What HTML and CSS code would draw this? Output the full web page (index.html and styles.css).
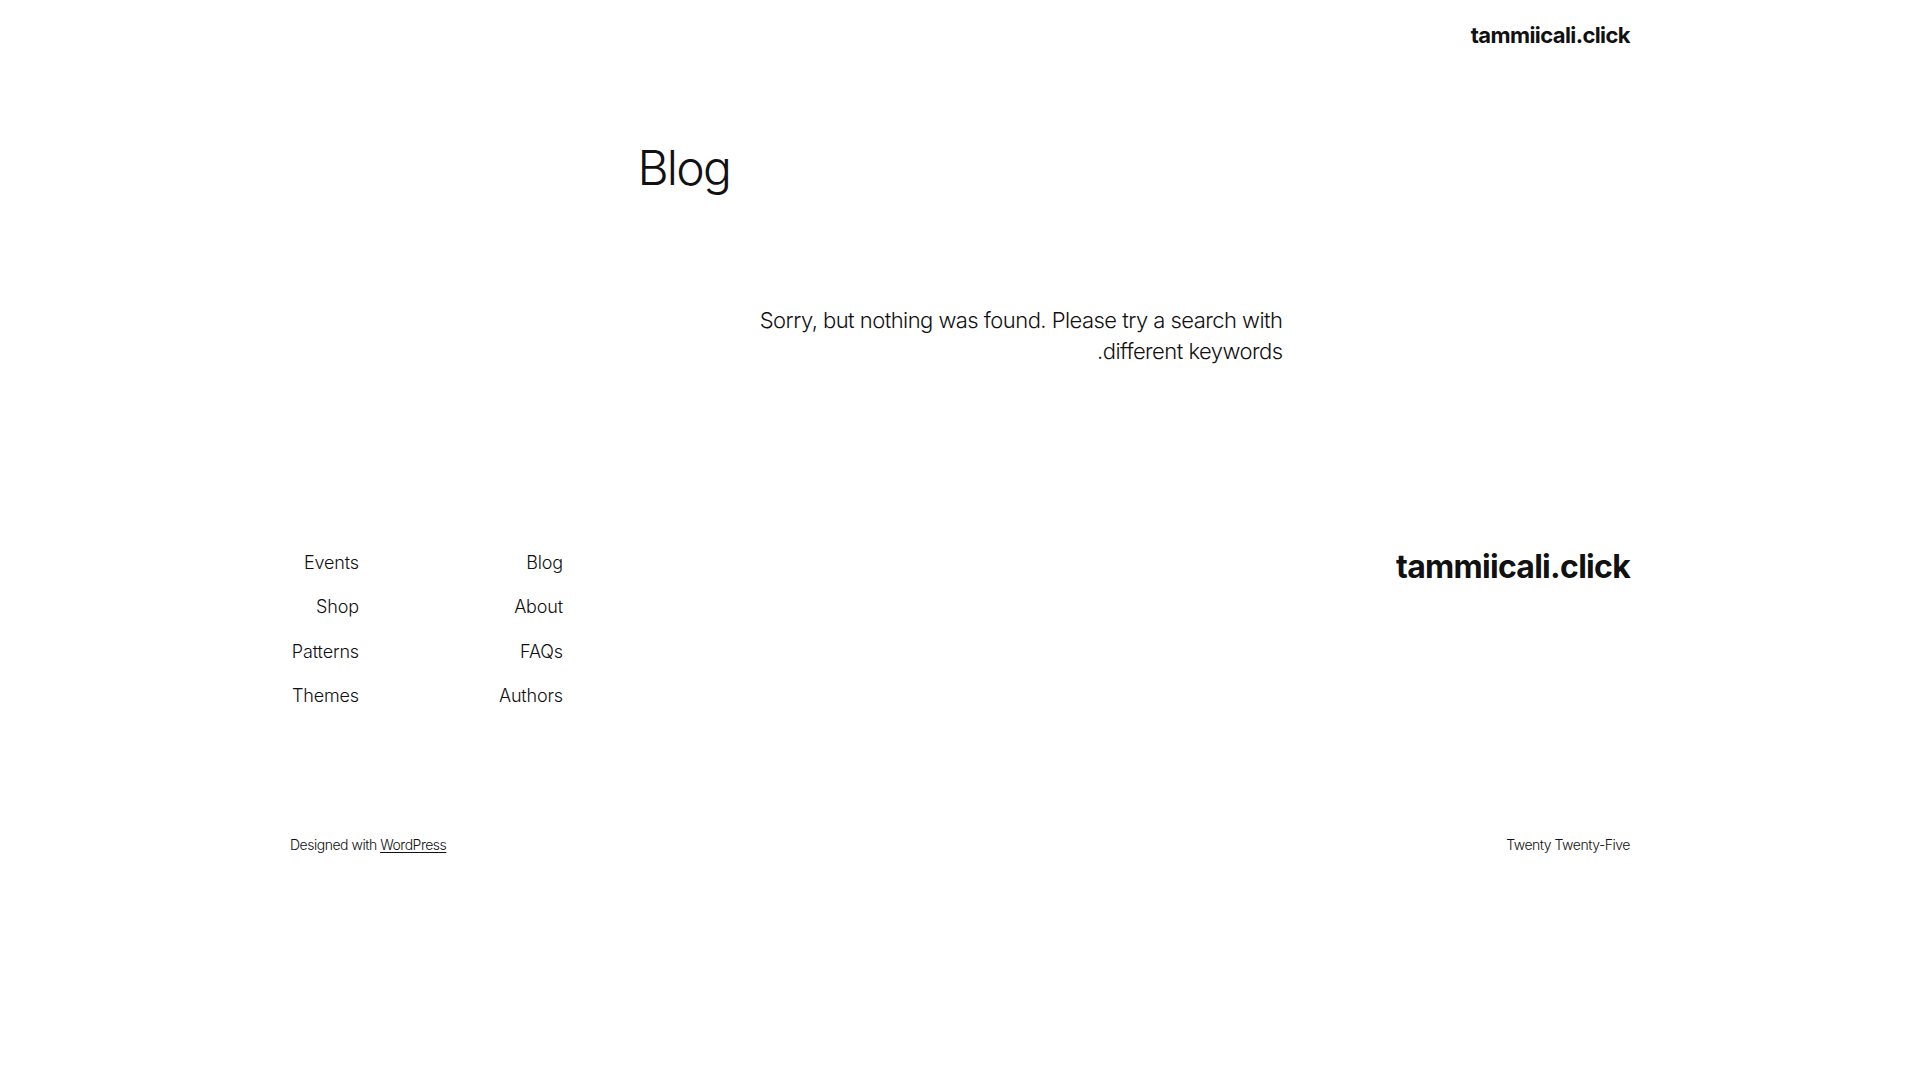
FILE: index.html
```html
<!DOCTYPE html>
<html lang="en" dir="rtl">
<head>
<meta charset="utf-8">
<title>Blog – tammiicali.click</title>
<link rel="stylesheet" href="styles.css">
</head>
<body>
<div class="site">
  <header class="site-header">
    <div class="wide header-inner">
      <p class="site-title"><a href="#">tammiicali.click</a></p>
    </div>
  </header>

  <main class="main">
    <div class="content">
      <h1 class="page-title">Blog</h1>
      <p class="no-results">Sorry, but nothing was found. Please try a search with different keywords.</p>
    </div>
  </main>

  <footer class="site-footer">
    <div class="wide footer-top">
      <p class="footer-title"><a href="#">tammiicali.click</a></p>
      <div class="footer-navs">
        <nav class="footer-nav">
          <a href="#">Blog</a>
          <a href="#">About</a>
          <a href="#">FAQs</a>
          <a href="#">Authors</a>
        </nav>
        <nav class="footer-nav">
          <a href="#">Events</a>
          <a href="#">Shop</a>
          <a href="#">Patterns</a>
          <a href="#">Themes</a>
        </nav>
      </div>
    </div>
    <div class="wide footer-bottom">
      <p class="credit">Twenty Twenty-Five</p>
      <p class="credit">Designed with <a class="wp-link" href="#">WordPress</a></p>
    </div>
  </footer>
</div>
</body>
</html>
```
FILE: styles.css
```css
html, body {
  margin: 0;
  padding: 0;
  background: #ffffff;
}

body {
  font-family: "Inter", "Liberation Sans", sans-serif;
  font-weight: 300;
  color: #111111;
}

a {
  color: inherit;
  text-decoration: none;
}

p, h1 {
  margin: 0;
}

.wide {
  width: 1340px;
  margin: 0 auto;
}

/* Header */
.site-header {
  padding-top: 22px;
}

.header-inner {
  display: flex;
  justify-content: flex-start;
}

.site-title {
  font-size: 22px;
  line-height: 26.4px;
  font-weight: 700;
  letter-spacing: -0.6px;
}

/* Main */
.main {
  padding-top: 90.5px;
}

.content {
  width: 645px;
  margin: 0 auto;
}

.page-title {
  font-size: 48px;
  line-height: 57.6px;
  font-weight: 350;
  letter-spacing: -1.8px;
  text-align: left;
}

.no-results {
  width: 560px;
  margin-top: 108.5px;
  font-size: 22px;
  line-height: 30.8px;
  font-weight: 300;
  letter-spacing: -0.54px;
  text-align: right;
}

/* Footer */
.site-footer {
  padding-top: 181px;
}

.footer-top {
  display: flex;
  justify-content: space-between;
  align-items: flex-start;
}

.footer-title {
  font-size: 32px;
  line-height: 38.4px;
  font-weight: 700;
  letter-spacing: -0.72px;
}

.footer-navs {
  display: flex;
  gap: 135px;
  margin-top: 2px;
}

.footer-nav {
  width: 69px;
  display: flex;
  flex-direction: column;
  align-items: flex-start;
  gap: 19.3px;
  font-size: 18px;
  line-height: 25.2px;
  font-weight: 300;
  letter-spacing: -0.15px;
}

.footer-nav a {
  white-space: nowrap;
}

.footer-bottom {
  display: flex;
  justify-content: space-between;
  align-items: center;
  margin-top: 127.2px;
}

.credit {
  font-size: 14px;
  line-height: 19.6px;
  font-weight: 300;
  letter-spacing: -0.48px;
}

.wp-link {
  text-decoration: underline;
  text-decoration-thickness: 1px;
  text-underline-offset: 2px;
}
```
